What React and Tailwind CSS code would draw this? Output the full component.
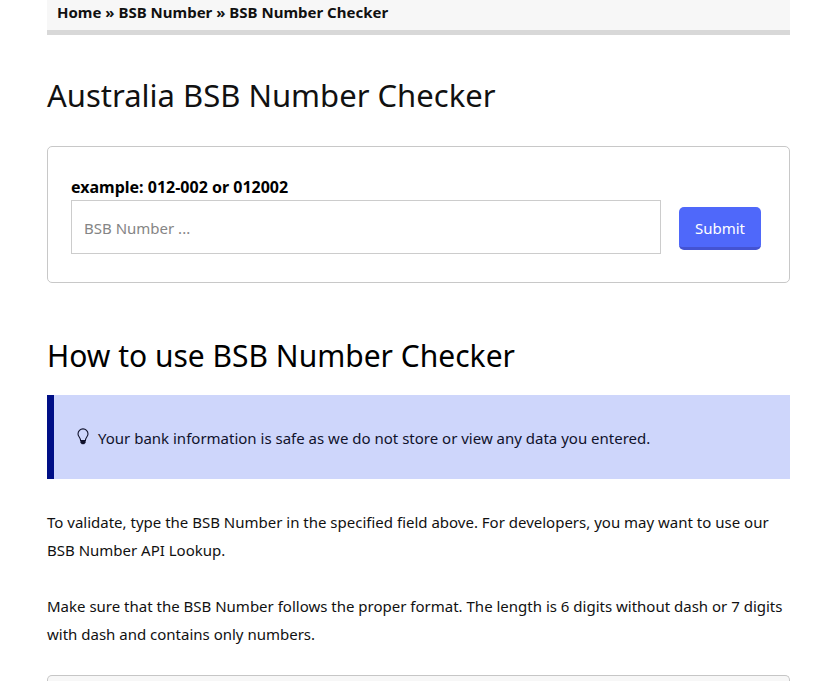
import { useState } from 'react';

const crumbs = [
  { name: 'Home', href: '#home' },
  { name: 'BSB Number', href: '#bsb-number' },
];

export default function App() {
  return (
    <main className="ml-[47px] mr-6 font-['Segoe_UI','Noto_Sans',sans-serif] text-[15px] leading-7 text-[#111111]">
      <Breadcrumb />
      <h1 className="mt-9 text-[31px] leading-12">Australia BSB Number Checker</h1>
      <BsbForm />

      <h2 className="mt-[49px] text-[30px] leading-12 text-black">How to use BSB Number Checker</h2>
      <div className="mt-[15px] flex items-center border-l-[7px] border-[#000f86] bg-[#ced6fb] px-[23px] pt-[29px] pb-[27px] text-[#10122c]">
        <BulbIcon />
        <p className="ml-[9px]">Your bank information is safe as we do not store or view any data you entered.</p>
      </div>

      <p className="mt-[29px]">
        To validate, type the BSB Number in the specified field above. For developers, you may want to use our BSB Number API Lookup.
      </p>
      <p className="mt-7">
        Make sure that the BSB Number follows the proper format. The length is 6 digits without dash or 7 digits with dash and contains only numbers.
      </p>

      {/* Top of the next panel */}
      <div className="mt-[27px] h-[6px] rounded-t-[5px] border border-b-0 border-[#c6c6c6] bg-[#f7f7f7]"></div>
    </main>
  );
}

function Breadcrumb() {
  return (
    <nav className="border-b-[5px] border-[#d8d8d8] bg-[#f7f7f7] px-[10px] pb-[6px] font-bold leading-6">
      {crumbs.map((crumb) => (
        <span key={crumb.name}>
          <a href={crumb.href}>{crumb.name}</a> »{' '}
        </span>
      ))}
      <span>BSB Number Checker</span>
    </nav>
  );
}

function BsbForm() {
  const [bsb, setBsb] = useState('');

  return (
    <form
      onSubmit={(e) => e.preventDefault()}
      className="mt-[27px] rounded-[5px] border border-[#c8c8c8] pt-[27px] pr-7 pb-7 pl-[23px]"
    >
      <label htmlFor="bsb" className="block text-base font-bold leading-[26px] text-black">example: 012-002 or 012002</label>
      <div className="flex items-center gap-[18px]">
        <input
          id="bsb"
          type="text"
          value={bsb}
          onChange={(e) => setBsb(e.target.value)}
          placeholder="BSB Number ..."
          className="h-[54px] min-w-0 flex-1 border border-[#cccccc] px-3 pt-[2px] placeholder:text-[#858585]"
        />
        <button
          type="submit"
          className="mt-[2px] h-[43px] w-[82px] rounded-[5px] border-b-3 border-[#4453d2] bg-[#4f68fa] pt-[2px] text-white"
        >
          Submit
        </button>
      </div>
    </form>
  );
}

function BulbIcon() {
  return (
    <svg width="12" height="20" viewBox="0 0 12 20" fill="none" stroke="currentColor" className="shrink-0">
      <path d="M3.6 12.5C3.6 9.6 1 8.4 1 5.9a5 5 0 0 1 10 0c0 2.5-2.6 3.7-2.6 6.6z" strokeWidth="1.1" />
      <path d="M3.6 12.5h4.8v2L7.3 16H4.7l-1.1-1.5z" fill="currentColor" strokeWidth="0.4" />
    </svg>
  );
}
